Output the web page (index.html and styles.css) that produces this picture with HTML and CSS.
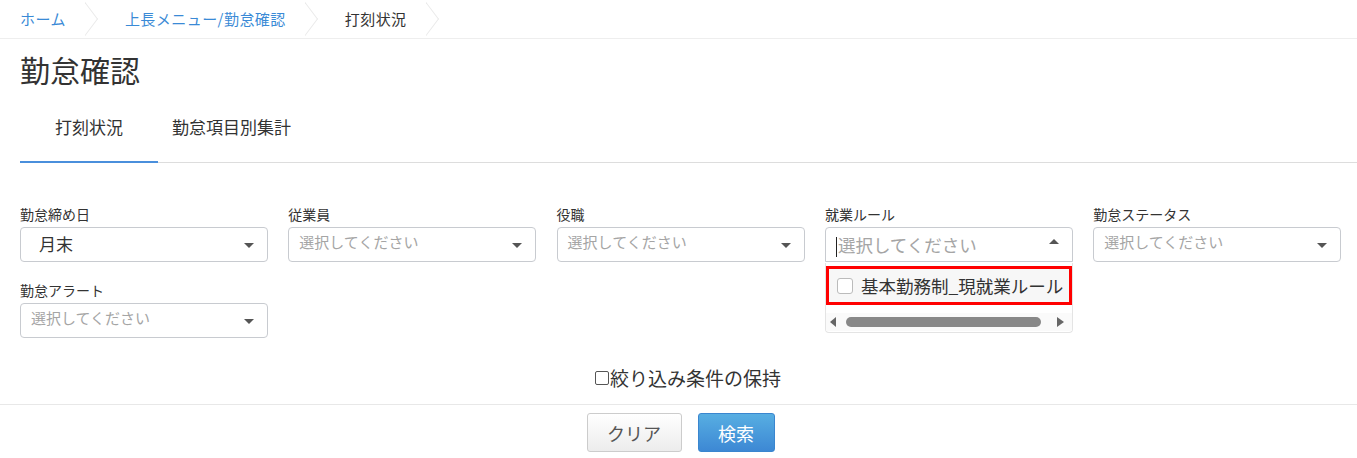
FILE: index.html
```html
<!DOCTYPE html>
<html lang="ja">
<head>
<meta charset="utf-8">
<link rel="stylesheet" href="styles.css">
</head>
<body>
<nav class="crumbs">
  <a class="crumb link">ホーム</a>
  <span class="sep"></span>
  <a class="crumb link">上長メニュー/勤怠確認</a>
  <span class="sep"></span>
  <span class="crumb">打刻状況</span>
  <span class="sep"></span>
</nav>
<h1 class="title">勤怠確認</h1>
<div class="tabs">
  <div class="tab active">打刻状況</div>
  <div class="tab">勤怠項目別集計</div>
</div>
<form class="filters">
  <div class="grid">
    <div class="field">
      <label>勤怠締め日</label>
      <div class="select"><span class="value">月末</span><span class="caret"></span></div>
    </div>
    <div class="field">
      <label>従業員</label>
      <div class="select"><span class="ph">選択してください</span><span class="caret"></span></div>
    </div>
    <div class="field">
      <label>役職</label>
      <div class="select"><span class="ph">選択してください</span><span class="caret"></span></div>
    </div>
    <div class="field">
      <label>就業ルール</label>
      <div class="select open"><span class="cursor"></span><span class="ph big">選択してください</span><span class="caret up"></span></div>
      <div class="menu">
        <div class="opt"><span class="box"></span><span class="opt-text">基本勤務制_現就業ルール</span></div>
        <div class="hscroll">
          <span class="arr left"></span>
          <span class="thumb"></span>
          <span class="arr right"></span>
        </div>
      </div>
    </div>
    <div class="field">
      <label>勤怠ステータス</label>
      <div class="select"><span class="ph">選択してください</span><span class="caret"></span></div>
    </div>
    <div class="field">
      <label>勤怠アラート</label>
      <div class="select"><span class="ph">選択してください</span><span class="caret"></span></div>
    </div>
  </div>
  <div class="keep"><span class="kbox"></span>絞り込み条件の保持</div>
  <div class="actions">
    <button type="button" class="btn clear">クリア</button>
    <button type="button" class="btn search">検索</button>
  </div>
</form>
</body>
</html>
```
FILE: styles.css
```css
* { box-sizing: border-box; }
html, body { margin: 0; padding: 0; background: #fff; }
body {
  font-family: "Noto Sans CJK JP", "Noto Sans", sans-serif;
  color: #333;
  font-size: 14px;
  width: 1357px;
  height: 458px;
  overflow: hidden;
}
.crumbs {
  display: flex;
  align-items: center;
  height: 39px;
  border-bottom: 1px solid #eee;
  padding-left: 20px;
}
.crumb { font-size: 15px; letter-spacing: 0.45px; line-height: 38px; color: #333; }
.crumb.link { color: #3a8ad6; }
.sep {
  width: 20px;
  height: 38px;
  margin: 0 20px 0 19px;
  position: relative;
  overflow: hidden;
}
.sep::before {
  content: "";
  position: absolute;
  left: -18px;
  top: 5px;
  width: 27px;
  height: 27px;
  border-top: 1px solid #eaeaea;
  border-right: 1px solid #eaeaea;
  transform: rotate(45deg) skew(8deg, 8deg);
}
.title {
  margin: 0;
  padding: 11px 0 0 20px;
  font-size: 30px;
  font-weight: 400;
  line-height: 38px;
  color: #333;
}
.tabs {
  display: flex;
  margin-top: 11px;
  margin-left: 20px;
  border-bottom: 1px solid #ddd;
  width: 1337px;
}
.tab {
  font-size: 17px;
  line-height: 22px;
  padding: 17px 14px 23px;
  text-align: center;
}
.tab.active {
  width: 138px;
  border-bottom: 2px solid #4a8fdc;
  margin-bottom: -1px;
}
.filters { padding: 41px 17px 0 20px; }
.grid {
  display: grid;
  grid-template-columns: repeat(5, 248px);
  column-gap: 20.3px;
  row-gap: 18px;
}
.field { position: relative; }
.field label {
  display: block;
  font-size: 14px;
  line-height: 20px;
  margin-bottom: 3px;
}
.select {
  position: relative;
  height: 35px;
  border: 1px solid #c8cbd0;
  border-radius: 4px;
  display: flex;
  align-items: center;
  padding-left: 10px;
}
.select .value { font-size: 17px; margin-left: 8px; color: #333; margin-top: -2px; }
.select .ph { font-size: 15px; color: #a5a5a5; margin-top: -7px; }
.select .ph.big { font-size: 17.5px; margin-top: -1px; }
.select.open { border-radius: 4px 4px 0 0; }
.cursor {
  width: 1px;
  height: 20px;
  background: #222;
  margin-right: 1px;
  margin-top: 4px;
}
.caret {
  position: absolute;
  right: 13px;
  top: 15px;
  width: 0;
  height: 0;
  border-left: 5px solid transparent;
  border-right: 5px solid transparent;
  border-top: 5px solid #555;
}
.caret.up {
  top: 11px;
  border-top: 0;
  border-bottom: 5px solid #555;
}
.menu {
  position: absolute;
  left: 0;
  top: 59px;
  width: 248px;
  height: 70px;
  background: #fff;
  border: 1px solid #e4e4e4;
  border-top: 0;
  border-radius: 0 0 4px 4px;
  z-index: 5;
}
.opt {
  margin-top: 3px;
  height: 39px;
  border: 3px solid #f00;
  display: flex;
  align-items: center;
  padding-left: 8px;
  background: #f7f7f7;
  overflow: hidden;
  white-space: nowrap;
}
.box {
  width: 16px;
  height: 16px;
  border: 1px solid #bbb;
  border-radius: 3px;
  background: #fff;
  margin-right: 8px;
  flex: none;
}
.opt-text { font-size: 17.5px; color: #333; }
.hscroll {
  display: flex;
  align-items: center;
  height: 18px;
  margin-top: 8px;
  padding: 0 4px;
  background: #fafafa;
}
.arr { width: 0; height: 0; border-top: 5px solid transparent; border-bottom: 5px solid transparent; }
.arr.left { border-right: 6px solid #666; }
.arr.right { border-left: 7px solid #666; margin-left: 16px; }
.thumb {
  width: 195px;
  height: 10px;
  border-radius: 5px;
  background: #888;
  margin-left: 10px;
}
.keep {
  text-align: center;
  font-size: 19px;
  line-height: 24px;
  margin-top: 28px;
  display: flex;
  justify-content: center;
  align-items: center;
  padding-left: 16px;
}
.kbox {
  width: 14px;
  height: 14px;
  border: 1px solid #555;
  border-radius: 2px;
  margin-right: 1px;
}
.actions {
  margin: 14px -17px 0 -20px;
  border-top: 1px solid #e8e8e8;
  padding-top: 8px;
  display: flex;
  justify-content: center;
  gap: 16px;
  padding-left: 4px;
}
.btn {
  font-family: inherit;
  font-size: 18px;
  height: 39px;
  border-radius: 3px;
  cursor: pointer;
}
.clear {
  width: 95px;
  color: #555;
  border: 1px solid #ccc;
  background: linear-gradient(#fff, #ececec);
}
.search {
  width: 77px;
  color: #fff;
  border: 1px solid #3a86cf;
  background: linear-gradient(#57aee2, #3d88d4);
}
```
